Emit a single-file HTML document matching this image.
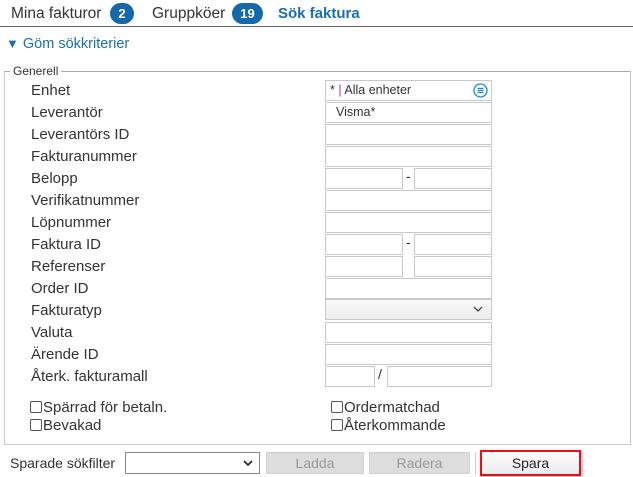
<!DOCTYPE html>
<html><head><meta charset="utf-8"><style>
*{box-sizing:border-box;margin:0;padding:0}
body{width:633px;height:477px;background:#fff;font-family:"Liberation Sans",sans-serif;font-size:14px;color:#333;position:relative;overflow:hidden}
.a{position:absolute;white-space:nowrap}
.badge{position:absolute;background:#1569a8;color:#fff;font-weight:bold;font-size:13px;border-radius:11px;height:21px;line-height:21px;text-align:center}
.in{position:absolute;border:1px solid #c8c8c8;background:#fff;height:21px}
.lbl{position:absolute;left:31px;font-size:15px;color:#333;line-height:19px}
.cb{position:absolute;width:12px;height:12px;border:1px solid #555;border-radius:2px;background:#fff}
.btn{position:absolute;height:22px;background:#ddd;border:1px solid #d0d0d0;color:#999;text-align:center;line-height:20px;font-size:14px}
</style></head><body>
<div class="a" style="left:11px;top:5px;font-size:15.5px">Mina fakturor</div>
<div class="badge" style="left:110px;top:3px;width:24px">2</div>
<div class="a" style="left:152px;top:5px;font-size:15.5px">Gruppköer</div>
<div class="badge" style="left:232px;top:3px;width:31px">19</div>
<div class="a" style="left:278px;top:5px;font-size:15px;font-weight:bold;color:#1a6fb0">Sök faktura</div>
<div class="a" style="left:0;top:26px;width:633px;height:1px;background:#666"></div>
<div class="a" style="left:6px;top:36px;font-size:14.5px;color:#1a6fb0"><span style="font-size:13px">▼</span> Göm sökkriterier</div>
<div class="a" style="left:4px;top:71px;width:627px;height:374px;border:1px solid #c8c8c8;border-top-color:#aaa"></div>
<div class="a" style="left:10px;top:64px;background:#fff;padding:0 3px;font-size:12px">Generell</div>

<div class="lbl" style="top:81px">Enhet</div>
<div class="lbl" style="top:103px">Leverantör</div>
<div class="lbl" style="top:125px">Leverantörs ID</div>
<div class="lbl" style="top:147px">Fakturanummer</div>
<div class="lbl" style="top:169px">Belopp</div>
<div class="lbl" style="top:191px">Verifikatnummer</div>
<div class="lbl" style="top:213px">Löpnummer</div>
<div class="lbl" style="top:235px">Faktura ID</div>
<div class="lbl" style="top:257px">Referenser</div>
<div class="lbl" style="top:279px">Order ID</div>
<div class="lbl" style="top:301px">Fakturatyp</div>
<div class="lbl" style="top:323px">Valuta</div>
<div class="lbl" style="top:345px">Ärende ID</div>
<div class="lbl" style="top:367px">Återk. fakturamall</div>

<div class="in" style="left:325px;top:80px;width:167px;font-size:12.5px;line-height:19px;padding-left:4px;color:#333">* <span style="color:#a04060">|</span> Alla enheter
<svg style="position:absolute;right:3px;top:2px" width="15" height="15" viewBox="0 0 15 15"><circle cx="7.5" cy="7.5" r="6.5" fill="none" stroke="#1a8ad0" stroke-width="1.3"/><path d="M4.5 5.5h6M4.5 7.5h6M4.5 9.5h6" stroke="#1a8ad0" stroke-width="1.2"/></svg></div>
<div class="in" style="left:325px;top:102px;width:167px;font-size:12.5px;line-height:19px;padding-left:10px">Visma*</div>
<div class="in" style="left:325px;top:124px;width:167px"></div>
<div class="in" style="left:325px;top:146px;width:167px"></div>
<div class="in" style="left:325px;top:168px;width:78px"></div>
<div class="a" style="left:406px;top:168px">-</div>
<div class="in" style="left:414px;top:168px;width:78px"></div>
<div class="in" style="left:325px;top:190px;width:167px"></div>
<div class="in" style="left:325px;top:212px;width:167px"></div>
<div class="in" style="left:325px;top:234px;width:78px"></div>
<div class="a" style="left:406px;top:234px">-</div>
<div class="in" style="left:414px;top:234px;width:78px"></div>
<div class="in" style="left:325px;top:256px;width:78px"></div>
<div class="in" style="left:414px;top:256px;width:78px"></div>
<div class="in" style="left:325px;top:278px;width:167px"></div>
<div class="in" style="left:325px;top:299px;width:167px;background:linear-gradient(#fafafa,#ececec)">
<svg style="position:absolute;right:8px;top:6px" width="10" height="7" viewBox="0 0 10 7"><path d="M1 1l4 4 4-4" fill="none" stroke="#444" stroke-width="1.3"/></svg></div>
<div class="in" style="left:325px;top:322px;width:167px"></div>
<div class="in" style="left:325px;top:344px;width:167px"></div>
<div class="in" style="left:325px;top:366px;width:50px"></div>
<div class="a" style="left:378px;top:366px">/</div>
<div class="in" style="left:387px;top:366px;width:105px"></div>

<div class="cb" style="left:30px;top:401px"></div><div class="a" style="left:43px;top:399px;font-size:15px">Spärrad för betaln.</div>
<div class="cb" style="left:30px;top:419px"></div><div class="a" style="left:43px;top:417px;font-size:15px">Bevakad</div>
<div class="cb" style="left:331px;top:401px"></div><div class="a" style="left:344px;top:399px;font-size:15px">Ordermatchad</div>
<div class="cb" style="left:331px;top:419px"></div><div class="a" style="left:344px;top:417px;font-size:15px">Återkommande</div>

<div class="a" style="left:10px;top:455px">Sparade sökfilter</div>
<div class="a" style="left:125px;top:452px;width:135px;height:22px;border:1px solid #888;background:#fff">
<svg style="position:absolute;right:6px;top:7px" width="10" height="7" viewBox="0 0 10 7"><path d="M1 1l4 4 4-4" fill="none" stroke="#222" stroke-width="1.6"/></svg></div>
<div class="btn" style="left:266px;top:452px;width:98px">Ladda</div>
<div class="btn" style="left:369px;top:452px;width:101px">Radera</div>
<div class="a" style="left:475px;top:452px;width:1px;height:22px;background:#ccc"></div>
<div class="a" style="left:480px;top:450px;width:101px;height:26px;border:2px solid #e0141e;background:linear-gradient(#fcfcfc,#ececec);box-shadow:1px 1px 3px #999;text-align:center;line-height:22px;color:#222">Spara</div>
</body></html>
